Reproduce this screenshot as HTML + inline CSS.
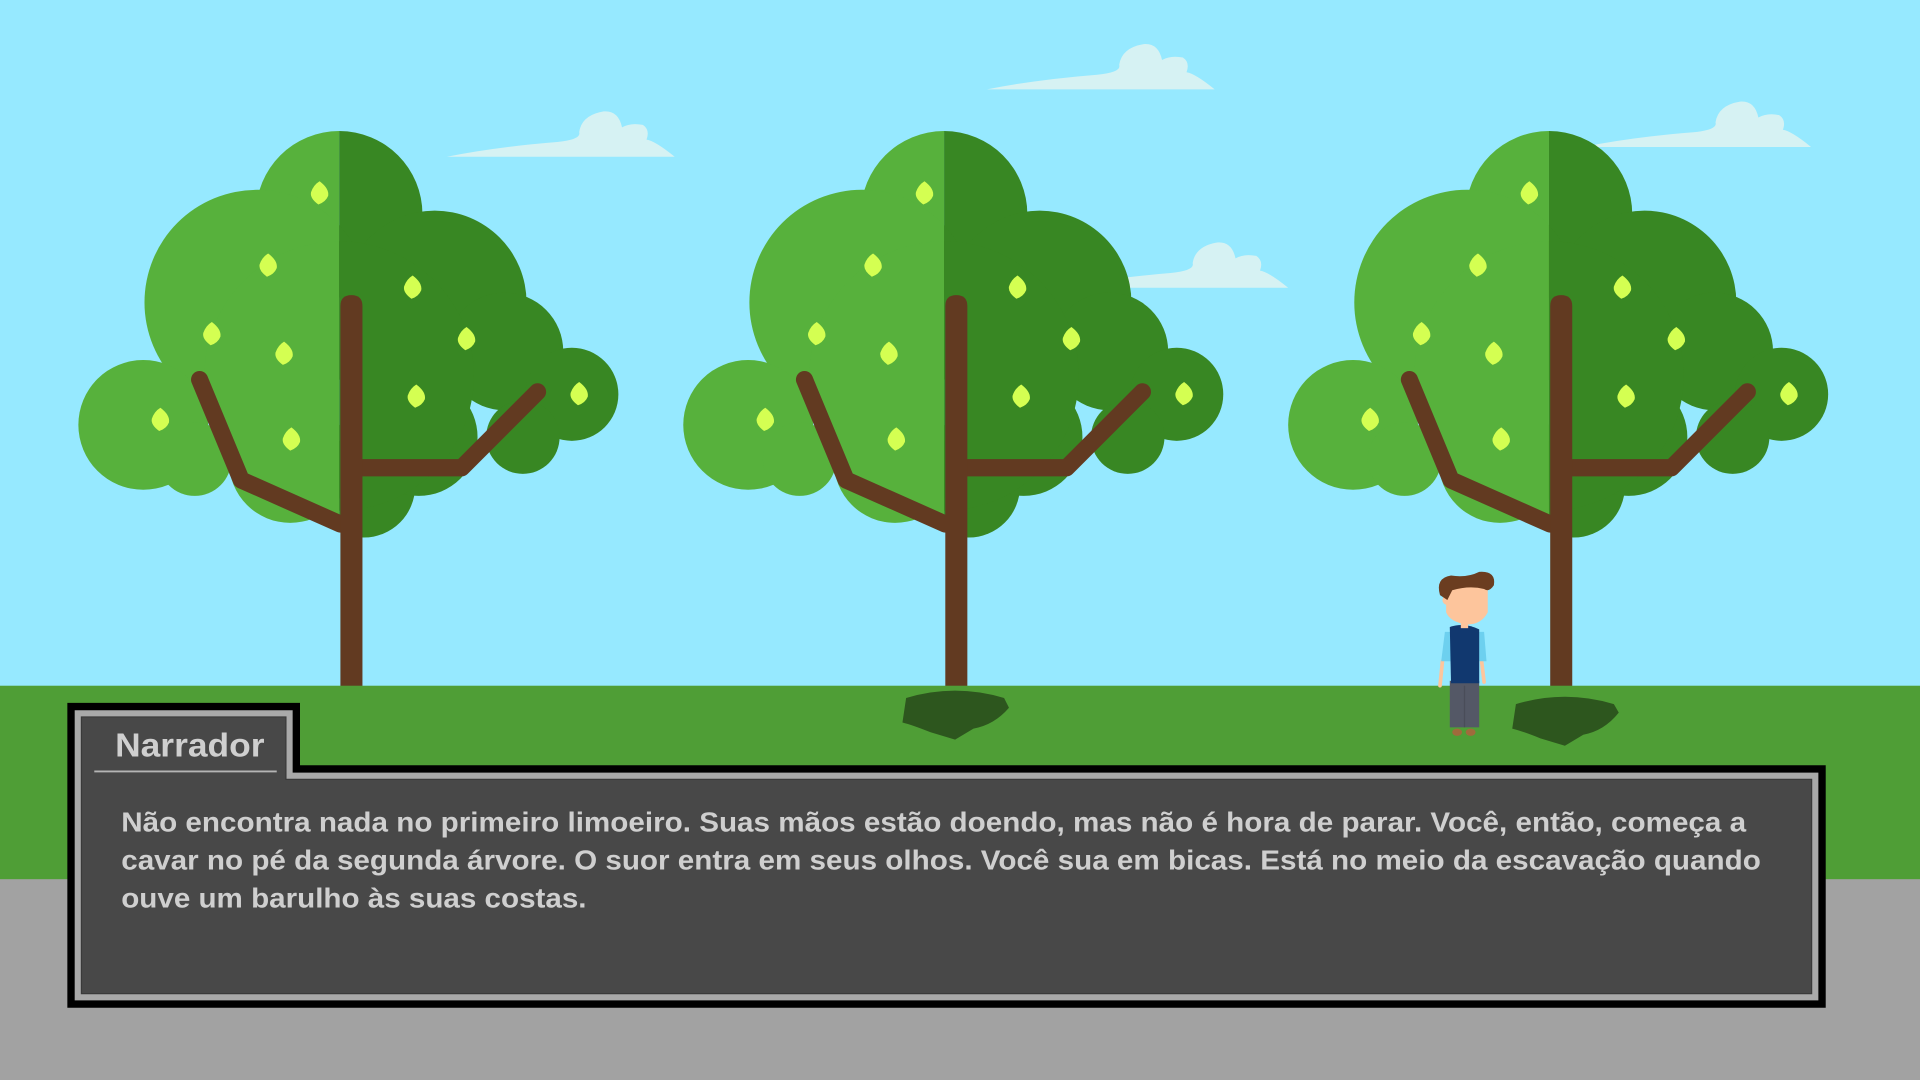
<!DOCTYPE html>
<html><head><meta charset="utf-8"><style>
html,body{margin:0;padding:0;width:1920px;height:1080px;overflow:hidden;background:#96e9ff}
svg{display:block}
</style></head><body>
<svg width="1920" height="1080" viewBox="0 0 1568 882" xmlns="http://www.w3.org/2000/svg">
<defs>
<g id="cloud">
<path d="M0 38 Q40 30 90 26 Q110 24 108 18 Q110 4 128 1 Q140 0 143 14 Q150 10 160 12 Q166 16 163 24 Q170 25 186 38 Z" fill="#d6f2f3"/>
</g>
<g id="crown">
<circle cx="0" cy="68" r="68"/>
<circle cx="-67" cy="140" r="92"/>
<circle cx="78" cy="140" r="75"/>
<circle cx="135" cy="180" r="48"/>
<circle cx="190" cy="215" r="38"/>
<circle cx="-160" cy="240" r="53"/>
<circle cx="-118" cy="268" r="30"/>
<circle cx="-40" cy="270" r="50"/>
<circle cx="20" cy="290" r="42"/>
<circle cx="65" cy="250" r="48"/>
<circle cx="150" cy="250" r="30"/>
<circle cx="0" cy="200" r="110"/>
</g>
<clipPath id="cl"><rect x="-300" y="0" width="300" height="400"/></clipPath>
<clipPath id="cr"><rect x="0" y="0" width="300" height="400"/></clipPath>
<g id="lemon"><path d="M0 -9 Q8 -3 7 3 Q5 8 -1 10 Q-8 5 -7 0 Q-5 -6 0 -9Z" fill="#d4ff52"/></g>
<g id="tree">
<g transform="translate(-10,107)">
<g clip-path="url(#cl)" fill="#57b13c"><use href="#crown"/></g>
<g clip-path="url(#cr)" fill="#388723"><use href="#crown"/></g>
</g>
<use href="#lemon" x="-26" y="157"/>
<use href="#lemon" x="-68" y="216"/>
<use href="#lemon" x="-114" y="272"/>
<use href="#lemon" x="-55" y="288"/>
<use href="#lemon" x="-156" y="342"/>
<use href="#lemon" x="-49" y="358"/>
<use href="#lemon" x="50" y="234"/>
<use href="#lemon" x="94" y="276"/>
<use href="#lemon" x="53" y="323"/>
<use href="#lemon" x="186" y="321"/>
<g stroke="#623a21" fill="none" stroke-width="14" stroke-linejoin="round">
<path d="M-124 310 L-90 392 L-9 428" stroke-linecap="round"/>
<path d="M0 382 L90 382 L152 320" stroke-linecap="round"/>
</g>
<path d="M-9 250 Q-9 241 0 241 Q9 241 9 250 L9 562 L-9 562 Z" fill="#623a21"/>
</g>
</defs>
<rect width="1568" height="882" fill="#96e9ff"/>
<use href="#cloud" x="365" y="90"/>
<use href="#cloud" x="806" y="35"/>
<use href="#cloud" x="866" y="197"/>
<use href="#cloud" x="1293" y="82"/>
<use href="#tree" x="287" y="0"/>
<use href="#tree" x="781" y="0"/>
<use href="#tree" x="1275" y="0"/>
<rect y="560" width="1568" height="160" fill="#4f9e36"/>
<rect y="718" width="1568" height="164" fill="#a2a2a2"/>
<path d="M740 570 Q780 558 820 570 L824 578 Q812 592 795 595 L780 604 L760 598 Q745 592 737 590 Z" fill="#2d561e"/>
<path d="M1238 575 Q1278 563 1318 575 L1322 582 Q1310 597 1293 600 L1278 609 L1258 603 Q1243 597 1235 595 Z" fill="#2d561e"/>
<g>
<rect x="1184" y="556" width="24" height="38" fill="#545866"/>
<path d="M1196 560 L1196 594" stroke="#4a4d59" stroke-width="1"/>
<ellipse cx="1190" cy="598" rx="4" ry="3" fill="#a06b3c"/>
<ellipse cx="1201" cy="598" rx="4" ry="3" fill="#a06b3c"/>
<path d="M1178 540 L1176 560" stroke="#fdc59c" stroke-width="3" stroke-linecap="round"/>
<path d="M1210 540 L1212 557" stroke="#fdc59c" stroke-width="3" stroke-linecap="round"/>
<path d="M1180 516 L1212 516 L1214 540 L1177 540 Z" fill="#6dd0ef"/>
<path d="M1184 512 Q1196 508 1208 514 L1208 558 L1185 558 Z" fill="#11386f"/>
<rect x="1193" y="505" width="6" height="8" fill="#fdc59c"/>
<ellipse cx="1182" cy="490" rx="4" ry="4" fill="#fdc59c"/>
<path d="M1181 478 L1215 478 L1215 500 Q1210 510 1198 510 Q1184 508 1181 500 Z" fill="#fdc59c"/>
<path d="M1176 486 Q1172 472 1185 470 Q1198 472 1208 467 Q1222 466 1220 478 Q1216 484 1212 481 Q1200 478 1186 482 L1182 490 Z" fill="#6b3d20"/>
</g>
<path d="M55 574 H245 V625 H1491 V823 H55 Z" fill="#000"/>
<path d="M61 580 H239 V631 H1485 V817 H61 Z" fill="#a9a9a9"/>
<path d="M66 585 H234 V636 H1480 V812 H66 Z" fill="#3a3a3a"/>
<path d="M67 586 H233 V637 H1479 V811 H67 Z" fill="#484848"/>
<line x1="77" y1="630" x2="226" y2="630" stroke="#b5b5b5" stroke-width="1.5"/>
<g font-family="Liberation Sans, Arial, sans-serif" font-weight="bold" fill="#cfcfcf">
<text x="94" y="618" font-size="27" textLength="122" lengthAdjust="spacingAndGlyphs">Narrador</text>
<text x="99" y="679" font-size="22.5" textLength="1327" lengthAdjust="spacingAndGlyphs">Não encontra nada no primeiro limoeiro. Suas mãos estão doendo, mas não é hora de parar. Você, então, começa a</text>
<text x="99" y="710" font-size="22.5" textLength="1339" lengthAdjust="spacingAndGlyphs">cavar no pé da segunda árvore. O suor entra em seus olhos. Você sua em bicas. Está no meio da escavação quando</text>
<text x="99" y="741" font-size="22.5" textLength="380" lengthAdjust="spacingAndGlyphs">ouve um barulho às suas costas.</text>
</g>
</svg>
</body></html>
